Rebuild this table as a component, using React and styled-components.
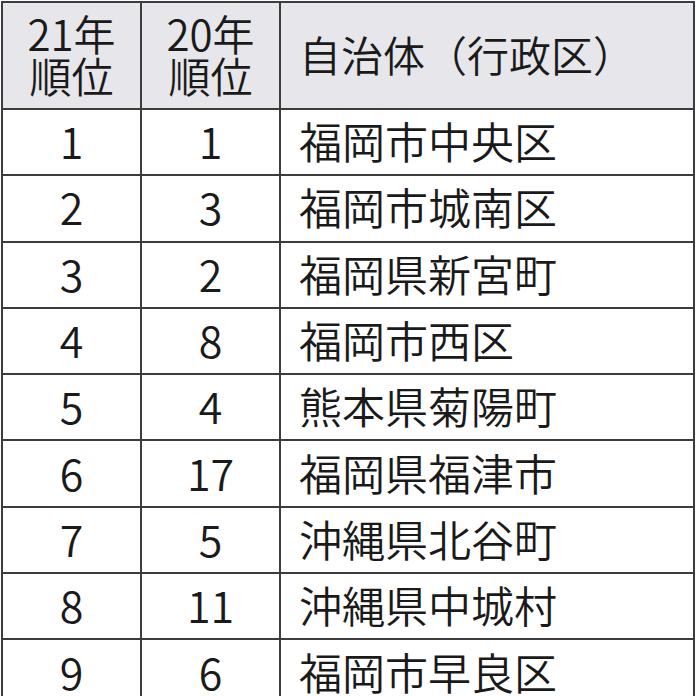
import React from 'react';
import styled, { createGlobalStyle } from 'styled-components';

const GlobalStyle = createGlobalStyle`
  html, body {
    margin: 0;
    padding: 0;
    background: #ffffff;
  }
  body {
    font-family: "Noto Sans CJK JP", "Noto Sans", sans-serif;
    color: #1a1a1a;
  }
`;

const Wrapper = styled.div`
  width: 696px;
  height: 696px;
  overflow: hidden;
  padding: 1px 0 0 1px;
  box-sizing: border-box;
`;

const Table = styled.table`
  border-collapse: collapse;
  table-layout: fixed;
  width: 694px;
`;

const HeadCell = styled.th`
  box-sizing: border-box;
  height: 107px;
  padding: 0 0 4px;
  background: #e6e6eb;
  border: 2px solid #3c3c3c;
  font-weight: 350;
  font-size: 42px;
  line-height: 42px;
  text-align: ${({ $align }) => $align || 'center'};
  padding-left: ${({ $align }) => ($align === 'left' ? '18px' : '0')};
  vertical-align: middle;
`;

const Cell = styled.td`
  box-sizing: border-box;
  height: 66.3px;
  padding: 0 0 3px;
  border: 2px solid #3c3c3c;
  font-weight: 350;
  font-size: 43px;
  line-height: 1;
  text-align: ${({ $align }) => $align || 'center'};
  padding-left: ${({ $align }) => ($align === 'left' ? '18px' : '0')};
  vertical-align: middle;
`;

const rows = [
  [1, 1, '福岡市中央区'],
  [2, 3, '福岡市城南区'],
  [3, 2, '福岡県新宮町'],
  [4, 8, '福岡市西区'],
  [5, 4, '熊本県菊陽町'],
  [6, 17, '福岡県福津市'],
  [7, 5, '沖縄県北谷町'],
  [8, 11, '沖縄県中城村'],
  [9, 6, '福岡市早良区'],
];

export default function App() {
  return (
    <Wrapper>
      <GlobalStyle />
      <Table>
        <colgroup>
          <col style={{ width: 139 }} />
          <col style={{ width: 139 }} />
          <col />
        </colgroup>
        <thead>
          <tr>
            <HeadCell>21年<br />順位</HeadCell>
            <HeadCell>20年<br />順位</HeadCell>
            <HeadCell $align="left">自治体（行政区）</HeadCell>
          </tr>
        </thead>
        <tbody>
          {rows.map(([a, b, name]) => (
            <tr key={a}>
              <Cell>{a}</Cell>
              <Cell>{b}</Cell>
              <Cell $align="left">{name}</Cell>
            </tr>
          ))}
        </tbody>
      </Table>
    </Wrapper>
  );
}
